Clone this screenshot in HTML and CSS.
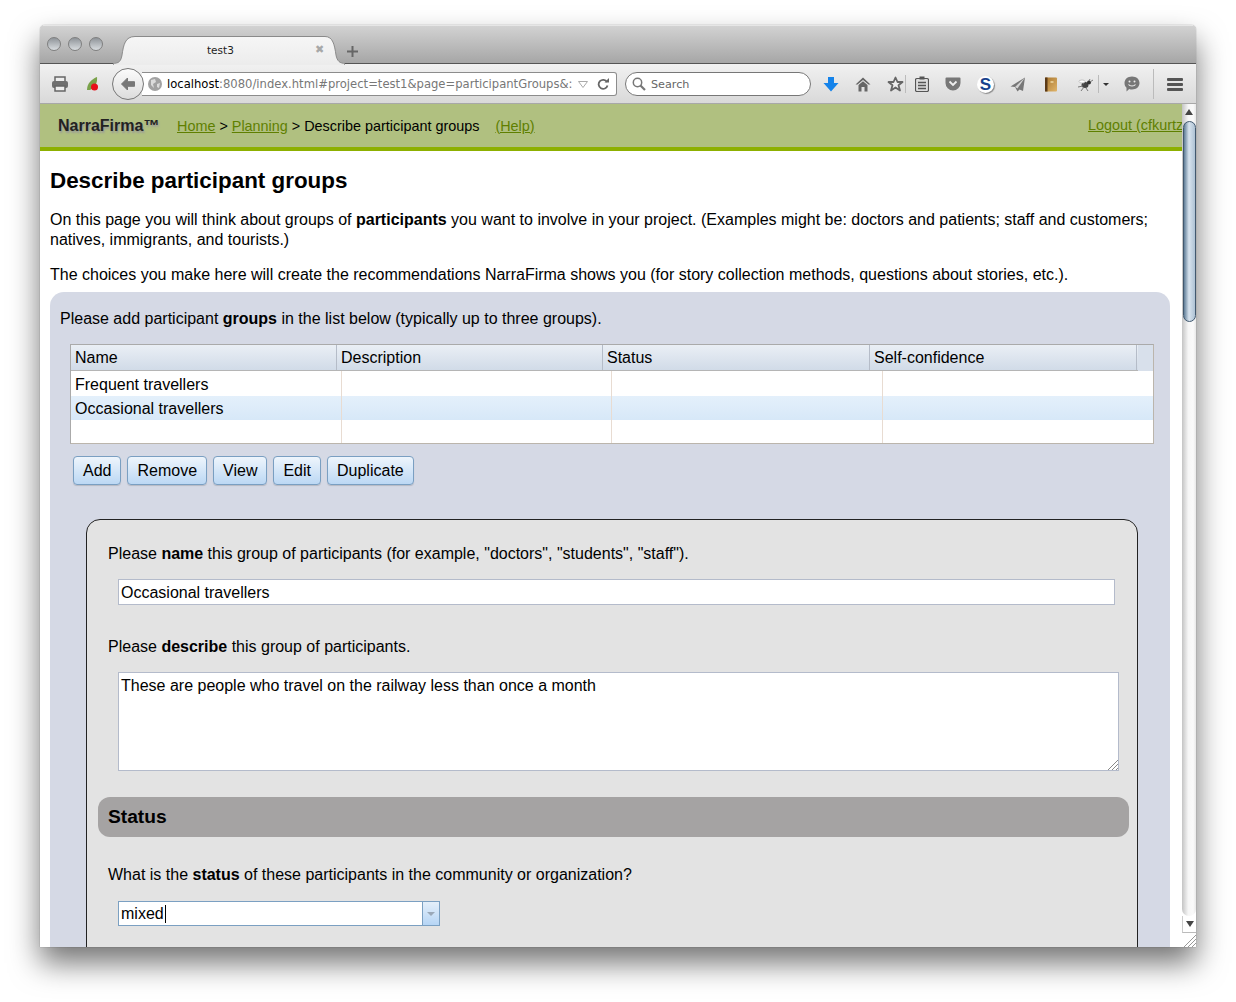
FILE: index.html
```html
<!DOCTYPE html>
<html lang="en">
<head>
  <meta charset="UTF-8" />
  <title>test3</title>
  <link rel="stylesheet" href="styles.css">
</head>
<body>
  <div class="window">
    <div class="titlebar">
      <div class="lights">
        <span class="light"></span>
        <span class="light"></span>
        <span class="light"></span>
      </div>
      <div class="tab">
        <svg class="tab-shape" width="232" height="30" viewBox="0 0 232 30">
          <defs>
            <linearGradient id="tabfill" x1="0" y1="0" x2="0" y2="1">
              <stop offset="0" stop-color="#f6f6f6"/>
              <stop offset="1" stop-color="#ececec"/>
            </linearGradient>
          </defs>
          <path d="M0 28.500C6 28.500 8 26 9 20C10.500 10 12 1.500 22 1.500H212C220 1.500 221.500 10 223 20C224 26 227 28.500 232 28.500V30H0Z" fill="url(#tabfill)" stroke="#8a8a8a"/>
          <path d="M1 29.500H231" stroke="#ececec" stroke-width="1.500"/>
        </svg>
        <span class="tab-title">test3</span>
        <span class="tab-close">✖</span>
      </div>
      <svg class="new-tab" width="11" height="11" viewBox="0 0 11 11"><path d="M5.500 0V11M0 5.500H11" stroke="#666" stroke-width="2"/></svg>
    </div>

    <div class="toolbar">
      <svg class="ico ico-print" width="18" height="16" viewBox="0 0 18 16">
        <path d="M4 5V1H14V5" fill="#eee" stroke="#666" stroke-width="1.500"/>
        <rect x="1" y="5" width="16" height="7" rx="2" fill="#707070"/>
        <rect x="4" y="10" width="10" height="5" fill="#eee" stroke="#666" stroke-width="1.500"/>
      </svg>
      <svg class="ico ico-leaf" width="14" height="16" viewBox="0 0 14 16">
        <path d="M1 14C1 7 6 3 11 1C11.500 6 10 11 4 14Z" fill="#7aa24a"/>
        <circle cx="8.500" cy="11" r="3.500" fill="#e8101a"/>
      </svg>
      <div class="urlwrap">
        <div class="back">
          <svg width="16" height="14" viewBox="0 0 16 14"><path d="M7.500 1L1.500 7L7.500 13V9.300H14.500V4.700H7.500Z" fill="#777" stroke="#777" stroke-linejoin="round"/></svg>
        </div>
        <div class="urlbar">
          <svg class="globe" width="14" height="14" viewBox="0 0 14 14">
            <circle cx="7" cy="7" r="7" fill="#a2a2a2"/>
            <path d="M3 3L7 2L8 5L5 7L6 11L3 8ZM9 7L12 6L11 11L9 10Z" fill="#dcdcdc"/>
          </svg>
          <span class="url"><span class="url-host">localhost</span>:8080/index.html#project=test1&amp;page=participantGroups&amp;:</span>
          <svg class="url-drop" width="10" height="7" viewBox="0 0 10 7"><path d="M0.500 0.500H9.500L5 6.500Z" fill="none" stroke="#aaa"/></svg>
          <svg class="url-reload" width="12" height="12" viewBox="0 0 12 12">
            <path d="M10 4A4.500 4.500 0 1 0 10.500 7.500" fill="none" stroke="#666" stroke-width="1.800"/>
            <path d="M7.500 4.500H12V0Z" fill="#666"/>
          </svg>
        </div>
      </div>
      <div class="searchbar">
        <svg width="14" height="14" viewBox="0 0 14 14">
          <circle cx="5.500" cy="5.500" r="4.200" fill="none" stroke="#777" stroke-width="1.500"/>
          <path d="M8.500 8.500L13 13" stroke="#777" stroke-width="2.200"/>
        </svg>
        <span>Search</span>
      </div>

      <svg class="ico ico-download" width="16" height="15" viewBox="0 0 16 15"><path d="M5 0H11V6H15.500L8 14.500L0.500 6H5Z" fill="#1583ea"/></svg>
      <svg class="ico ico-home" width="16" height="15" viewBox="0 0 16 15">
        <path d="M8 0.500L0.500 7.500H2.500L8 3L13.500 7.500H15.500Z" fill="#666"/>
        <path d="M3.500 8L8 4.200L12.500 8V14.500H9.500V10H6.500V14.500H3.500Z" fill="#666"/>
      </svg>
      <svg class="ico ico-star" width="17" height="16" viewBox="0 0 17 16"><path d="M8.500 1.500L10.500 6H15.500L11.500 9.200L13 14.500L8.500 11.500L4 14.500L5.500 9.200L1.500 6H6.500Z" fill="#eee" stroke="#666" stroke-width="1.800" stroke-linejoin="round"/></svg>
      <span class="vsep sep-star"></span>
      <svg class="ico ico-list" width="14" height="16" viewBox="0 0 14 16">
        <rect x="0.500" y="2.500" width="13" height="13" rx="1.500" fill="#ddd" stroke="#555" stroke-width="1.200"/>
        <rect x="4.500" y="0.500" width="5" height="3" fill="#555"/>
        <path d="M3 6.500H11M3 9.500H11M3 12.500H11" stroke="#555" stroke-width="1.500"/>
      </svg>
      <svg class="ico ico-pocket" width="16" height="14" viewBox="0 0 16 14">
        <path d="M1.500 0.500H14.500A1 1 0 0 1 15.500 1.500V6A7.500 7.500 0 0 1 0.500 6V1.500A1 1 0 0 1 1.500 0.500Z" fill="#777"/>
        <path d="M4.500 4.500L8 8L11.500 4.500" fill="none" stroke="#eee" stroke-width="1.800"/>
      </svg>
      <span class="ico-s">S</span>
      <svg class="ico ico-plane" width="16" height="15" viewBox="0 0 16 15">
        <path d="M15 0.500L0.500 9.500L5 10L7.500 14.500L9.500 12.500L13 14Z" fill="#777"/>
        <path d="M15 0.500L5 10L7.500 11.500Z" fill="#d4d4d4"/>
      </svg>
      <svg class="ico ico-book" width="14" height="15" viewBox="0 0 14 15">
        <defs>
          <linearGradient id="bookfill" x1="0" y1="0" x2="1" y2="1">
            <stop offset="0" stop-color="#a8762f"/>
            <stop offset="1" stop-color="#e0b469"/>
          </linearGradient>
        </defs>
        <rect x="1" y="0.500" width="12" height="14" rx="1" fill="url(#bookfill)"/>
        <rect x="1" y="0.500" width="2.500" height="14" fill="#5b3a17"/>
        <rect x="6.500" y="4" width="3" height="2" fill="#e4c88e"/>
      </svg>
      <svg class="ico ico-bug" width="16" height="13" viewBox="0 0 16 13">
        <ellipse cx="7" cy="7" rx="3.500" ry="3" fill="#444"/>
        <circle cx="11" cy="4.500" r="2" fill="#333"/>
        <path d="M1 3L6 6M0 9L5 8M3 13L6 9M8 10L10 13M12 1L11 3M15 2L12 4" stroke="#777"/>
        <ellipse cx="4" cy="3.500" rx="3" ry="1.500" fill="#fff" stroke="#999" stroke-width="0.500"/>
      </svg>
      <span class="vsep sep-bug"></span>
      <span class="mini-drop"></span>
      <svg class="ico ico-chat" width="16" height="16" viewBox="0 0 16 16">
        <path d="M8 0.500C12.400 0.500 15.500 3.300 15.500 7S12.400 13.500 8 13.500C7 13.500 6 13.400 5.200 13L2.500 15.500V11.800C1.200 10.600 0.500 9 0.500 7C0.500 3.300 3.600 0.500 8 0.500Z" fill="#777"/>
        <circle cx="5.500" cy="5.500" r="1" fill="#eee"/>
        <circle cx="10.500" cy="5.500" r="1" fill="#eee"/>
        <path d="M4.500 8.500C6 10.500 10 10.500 11.500 8.500" fill="none" stroke="#eee" stroke-width="1.200"/>
      </svg>
      <span class="vsep sep-chat"></span>
      <span class="burger"><i></i><i></i><i></i></span>
    </div>

    <div class="viewport">
      <div class="page">
        <div class="appbar">
          <span class="brand">NarraFirma™</span>
          <span class="crumbs"><a>Home</a> &gt; <a>Planning</a> &gt; Describe participant groups</span>
          <a class="help">(Help)</a>
          <a class="logout">Logout (cfkurtz)</a>
        </div>

        <div class="content">
          <h1>Describe participant groups</h1>
          <p class="intro">On this page you will think about groups of <b>participants</b> you want to involve in your project. (Examples might be: doctors and patients; staff and customers; natives, immigrants, and tourists.)</p>
          <p class="intro second">The choices you make here will create the recommendations NarraFirma shows you (for story collection methods, questions about stories, etc.).</p>

          <div class="panel">
            <p class="panel-prompt">Please add participant <b>groups</b> in the list below (typically up to three groups).</p>

            <div class="grid">
              <div class="grid-head">
                <span>Name</span>
                <span>Description</span>
                <span>Status</span>
                <span>Self-confidence</span>
              </div>
              <div class="grid-row first"><span>Frequent travellers</span><span></span><span></span><span></span></div>
              <div class="grid-row selected"><span>Occasional travellers</span><span></span><span></span><span></span></div>
              <div class="grid-row"><span></span><span></span><span></span><span></span></div>
            </div>

            <div class="buttons">
              <button>Add</button>
              <button>Remove</button>
              <button>View</button>
              <button>Edit</button>
              <button>Duplicate</button>
            </div>

            <div class="detail">
              <p class="prompt">Please <b>name</b> this group of participants (for example, "doctors", "students", "staff").</p>
              <div class="textbox">Occasional travellers</div>

              <p class="prompt describe">Please <b>describe</b> this group of participants.</p>
              <div class="textarea">
                These are people who travel on the railway less than once a month
                <svg class="grip" width="11" height="11" viewBox="0 0 11 11"><path d="M1 11L11 1M5 11L11 5M9 11L11 9" stroke="#888"/></svg>
              </div>

              <h2 class="section">Status</h2>
              <p class="prompt status">What is the <b>status</b> of these participants in the community or organization?</p>
              <div class="combo">
                <span class="combo-value">mixed</span>
                <span class="combo-arrow"><i></i></span>
              </div>
            </div>
          </div>
        </div>
      </div>

      <div class="scrollbar">
        <div class="track">
          <span class="arrow-up"></span>
          <div class="thumb"></div>
        </div>
        <div class="down-box"><span class="arrow-down"></span></div>
        <svg class="corner" width="14" height="14" viewBox="0 0 14 14"><path d="M2 14L14 2M6 14L14 6M10 14L14 10" stroke="#999"/></svg>
      </div>
    </div>
  </div>
</body>
</html>
```

FILE: styles.css
```css
* {
  box-sizing: border-box;
}
body {
  margin: 0;
  height: 1002px;
  background-color: #fff;
  font-family: "Liberation Sans", Arial, sans-serif;
  font-size: 16px;
  color: #000;
  overflow: hidden;
}
.window {
  margin: 25px 40px 0;
  width: 1156px;
  height: 922px;
  display: flex;
  flex-direction: column;
  border-radius: 5px 5px 0 0;
  box-shadow: 0 16px 30px rgba(0, 0, 0, 0.55), 0 0 1px rgba(0, 0, 0, 0.6);
  overflow: hidden;
  background-color: #fff;
}

/* browser chrome */
.titlebar {
  height: 39px;
  flex: none;
  display: flex;
  align-items: flex-start;
  background: linear-gradient(#d2d2d2, #a6a6a6);
  border-top: 1px solid #e6e6e6;
  border-bottom: 1px solid #555;
}
.lights {
  display: flex;
  gap: 7px;
  margin: 11px 0 0 7px;
}
.light {
  width: 14px;
  height: 14px;
  border-radius: 50%;
  border: 1px solid #7f7f7f;
  background: linear-gradient(#8f9499, #d9dde0);
}
.tab {
  position: relative;
  width: 232px;
  height: 30px;
  margin: 9px 0 0 10px;
}
.tab-shape {
  position: absolute;
  left: 0;
  top: 0;
}
.tab-title {
  position: absolute;
  left: 94px;
  top: 9px;
  font-family: "DejaVu Sans", sans-serif;
  font-size: 10.5px;
  color: #222;
}
.tab-close {
  position: absolute;
  left: 202px;
  top: 8px;
  font-size: 11px;
  color: #a8a8a8;
}
.new-tab {
  margin: 20px 0 0 2px;
}

.toolbar {
  height: 40px;
  flex: none;
  display: flex;
  align-items: center;
  padding-top: 1px;
  background: linear-gradient(#f1f1f1, #d9d9d9);
  border-bottom: 1px solid #a8a8a8;
}
.ico {
  flex: none;
}
.ico-print {
  margin-left: 11px;
}
.ico-leaf {
  margin-left: 17px;
}
.urlwrap {
  display: flex;
  align-items: center;
  margin-left: 12px;
}
.back {
  width: 32px;
  height: 32px;
  flex: none;
  display: flex;
  align-items: center;
  justify-content: center;
  border-radius: 50%;
  border: 1px solid #777;
  background: linear-gradient(#fbfbfb, #dcdcdc);
  position: relative;
  z-index: 1;
}
.urlbar {
  width: 475px;
  height: 24px;
  margin-left: -2px;
  display: flex;
  align-items: center;
  background-color: #fff;
  border: 1px solid #8c8c8c;
  border-left: none;
  border-radius: 0 3px 3px 0;
}
.globe {
  margin-left: 6px;
  flex: none;
}
.url {
  width: 405px;
  flex: none;
  margin-left: 5px;
  font-family: "DejaVu Sans", sans-serif;
  font-size: 11.6px;
  color: #777;
  white-space: nowrap;
}
.url-host {
  color: #000;
}
.url-drop {
  margin-left: 6px;
  flex: none;
}
.url-reload {
  margin-left: 9px;
  flex: none;
}
.searchbar {
  width: 186px;
  height: 24px;
  flex: none;
  margin-left: 8px;
  display: flex;
  align-items: center;
  gap: 5px;
  padding-left: 6px;
  background-color: #fff;
  border: 1px solid #777;
  border-radius: 12px;
  font-family: "DejaVu Sans", sans-serif;
  font-size: 11.2px;
  color: #666;
}
.ico-download {
  margin-left: 12px;
}
.ico-home {
  margin-left: 16px;
}
.ico-star {
  margin-left: 16px;
}
.vsep {
  width: 1px;
  flex: none;
  background-color: #bbb;
}
.sep-star {
  height: 18px;
  margin-left: 1px;
}
.ico-list {
  margin-left: 9px;
}
.ico-pocket {
  margin-left: 16px;
}
.ico-s {
  width: 17px;
  height: 17px;
  flex: none;
  margin-left: 16px;
  border-radius: 50%;
  background-color: #fff;
  box-shadow: 1px 1px 1px #888;
  font-size: 17px;
  font-weight: bold;
  line-height: 17px;
  text-align: center;
  color: #17418c;
}
.ico-plane {
  margin-left: 16px;
}
.ico-book {
  margin-left: 18px;
}
.ico-bug {
  margin-left: 20px;
}
.sep-bug {
  height: 18px;
  margin-left: 4px;
}
.mini-drop {
  width: 0;
  height: 0;
  flex: none;
  margin-left: 4px;
  border-left: 3px solid transparent;
  border-right: 3px solid transparent;
  border-top: 3px solid #333;
}
.ico-chat {
  margin-left: 15px;
}
.sep-chat {
  height: 30px;
  margin-left: 13px;
}
.burger {
  width: 16px;
  flex: none;
  margin-left: 13px;
  display: flex;
  flex-direction: column;
  gap: 2px;
}
.burger i {
  height: 3px;
  border-radius: 1px;
  background-color: #555;
}

/* page */
.viewport {
  flex: 1;
  display: flex;
  min-height: 0;
}
.page {
  width: 1142px;
  overflow: hidden;
}
.appbar {
  height: 47px;
  position: relative;
  display: flex;
  align-items: center;
  padding: 0 0 0 18px;
  background-color: #b0c080;
  border-bottom: 4px solid #8db000;
  font-size: 14.4px;
  white-space: nowrap;
}
.appbar a {
  color: #5f7f00;
  text-decoration: underline;
}
.brand {
  width: 119px;
  font-size: 16px;
  font-weight: bold;
  color: #222;
  text-shadow: 1px 2px 2px #999;
}
.help {
  margin-left: 16px;
}
.logout {
  position: absolute;
  left: 1048px;
  top: 13px;
}
.content {
  padding: 0 12px 0 10px;
}
h1 {
  margin: 16px 0 0;
  font-size: 22.4px;
  line-height: 28px;
}
.intro {
  margin: 15px 0 0;
  line-height: 20px;
}
.intro.second {
  margin-top: 15px;
}
.panel {
  margin-top: 7px;
  padding: 17px 16px 0 20px;
  height: 700px;
  background-color: #d5d9e5;
  border-radius: 14px;
}
.panel-prompt {
  margin: 0 0 0 -10px;
  line-height: 20px;
}
.grid {
  margin-top: 15px;
  width: 1084px;
  height: 100px;
  overflow: hidden;
  background-color: #fff;
  border: 1px solid #aaa;
  border-right-color: #bbb5ac;
  border-bottom-color: #bbb5ac;
}
.grid-head {
  height: 26px;
  display: grid;
  grid-template-columns: 266px 266px 267px 267px;
  width: 1067px;
  background: linear-gradient(#eaeff5, #d1dbe8);
  border-bottom: 1px solid #b5b5b5;
  box-shadow: 16px 0 0 #d8e0eb;
}
.grid-head span {
  padding: 3px 4px 0;
  line-height: 20px;
  border-right: 1px solid #b5bcc8;
}
.grid-row {
  height: 24px;
  display: grid;
  grid-template-columns: 271px 270px 271px 1fr;
}
.grid-row.first {
  height: 25px;
}
.grid-row span {
  padding: 0 4px;
  line-height: 26px;
  border-right: 1px solid #e8dcd2;
}
.grid-row.first span {
  line-height: 28px;
}
.grid-row span:last-child {
  border-right: none;
}
.grid-row.selected {
  background: linear-gradient(#e4f0fb, #d7e8f8);
}
.buttons {
  display: flex;
  gap: 6px;
  margin: 12px 0 0 3px;
}
button {
  height: 29px;
  padding: 0 9px;
  font-family: inherit;
  font-size: 16px;
  color: #000;
  background: linear-gradient(#eef5fc, #bcd8f4);
  border: 1px solid #7a9fc2;
  border-radius: 4px;
  box-shadow: 0 1px 1px rgba(0, 0, 0, 0.15);
}
.detail {
  width: 1052px;
  height: 500px;
  margin: 34px 0 0 16px;
  padding: 0 8px 0 11px;
  background-color: #e3e3e3;
  border: 1px solid #222;
  border-radius: 14px;
}
.prompt {
  margin: 24px 0 0 10px;
  line-height: 20px;
}
.textbox {
  width: 997px;
  height: 26px;
  margin: 15px 0 0 20px;
  padding-left: 2px;
  line-height: 25px;
  background-color: #fff;
  border: 1px solid #b4bbcb;
}
.prompt.describe {
  margin-top: 32px;
}
.textarea {
  position: relative;
  width: 1001px;
  height: 99px;
  margin: 15px 0 0 20px;
  padding: 3px 0 0 2px;
  line-height: 20px;
  background-color: #fff;
  border: 1px solid #b4bbcb;
}
.grip {
  position: absolute;
  right: 0;
  bottom: 0;
}
.section {
  height: 40px;
  margin: 26px 0 0;
  padding-left: 10px;
  font-size: 19.2px;
  line-height: 40px;
  background-color: #a5a3a3;
  border-radius: 12px;
}
.prompt.status {
  margin-top: 28px;
}
.combo {
  display: flex;
  width: 322px;
  height: 25px;
  margin: 16px 0 0 20px;
  background-color: #fff;
  border: 1px solid #7ba0c2;
}
.combo-value {
  flex: 1;
  padding-left: 2px;
  line-height: 23px;
}
.combo-value::after {
  content: "";
  display: inline-block;
  width: 1px;
  height: 18px;
  margin-left: 1px;
  vertical-align: -4px;
  background-color: #000;
}
.combo-arrow {
  width: 17px;
  display: flex;
  align-items: center;
  justify-content: center;
  border-left: 1px solid #7ba0c2;
  background: linear-gradient(#e4effa, #b6d5f5);
}
.combo-arrow i {
  width: 0;
  height: 0;
  border-left: 4px solid transparent;
  border-right: 4px solid transparent;
  border-top: 4px solid #9aa8b8;
}

/* scrollbar */
.scrollbar {
  position: relative;
  width: 14px;
  flex: none;
  display: flex;
  flex-direction: column;
  background-color: #fff;
}
.track {
  height: 812px;
  display: flex;
  flex-direction: column;
  align-items: center;
  border-radius: 0 0 7px 7px;
  background: linear-gradient(90deg, #c4c4c4, #f6f6f6 45%, #fafafa 80%, #e8e8e8);
}
.arrow-up {
  margin-top: 5px;
  width: 0;
  height: 0;
  border-left: 4px solid transparent;
  border-right: 4px solid transparent;
  border-bottom: 6px solid #444;
}
.thumb {
  width: 13px;
  height: 201px;
  margin-top: 6px;
  border-radius: 7px;
  border: 1px solid #41586e;
  background: linear-gradient(90deg, #5f7d97, #d7e3ee 45%, #aec2d4);
}
.down-box {
  height: 17px;
  display: flex;
  align-items: center;
  justify-content: center;
  border-bottom: 1px solid #bbb;
  border-left: 1px solid #ccc;
}
.arrow-down {
  width: 0;
  height: 0;
  border-left: 4px solid transparent;
  border-right: 4px solid transparent;
  border-top: 6px solid #444;
}
.corner {
  position: absolute;
  right: 0;
  bottom: 0;
}
```
